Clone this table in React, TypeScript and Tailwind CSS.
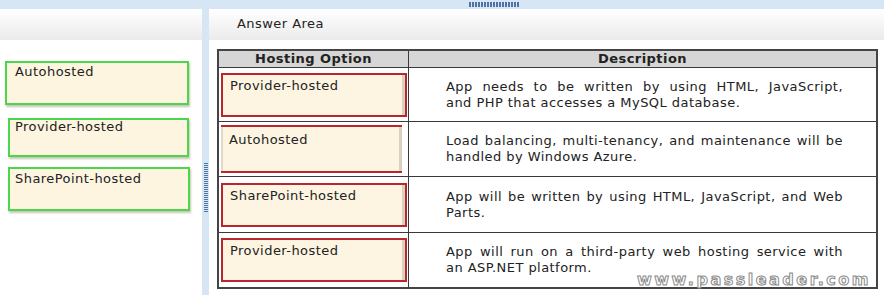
const options = ["Autohosted", "Provider-hosted", "SharePoint-hosted"];

const rows = [
  {
    option: "Provider-hosted",
    variant: "full",
    lines: ["App needs to be written by using HTML, JavaScript,", "and PHP that accesses a MySQL database."],
  },
  {
    option: "Autohosted",
    variant: "lines",
    lines: ["Load balancing, multi-tenancy, and maintenance will be", "handled by Windows Azure."],
  },
  {
    option: "SharePoint-hosted",
    variant: "full",
    lines: ["App will be written by using HTML, JavaScript, and Web", "Parts."],
  },
  {
    option: "Provider-hosted",
    variant: "full",
    lines: ["App will run on a third-party web hosting service with", "an ASP.NET platform."],
  },
];

function Grip({ vertical }: { vertical?: boolean }) {
  return vertical ? (
    <div className="h-[50px] w-[4px] bg-[repeating-linear-gradient(0deg,#4f73a3_0_1px,transparent_1px_2px)]" />
  ) : (
    <div className="h-[5px] w-[51px] bg-[repeating-linear-gradient(90deg,#4f73a3_0_2px,transparent_2px_3px)]" />
  );
}

function AnswerRow({ option, variant, lines, idx }: { option: string; variant: string; lines: string[]; idx: number }) {
  const heights = ["h-[54px]", "h-[55px]", "h-[56px]", "h-[55px]"];
  return (
    <>
      <div className={`${heights[idx]} border-t border-[#3a3a3a] border-r flex items-center pl-[2px]`}>
        {variant === "full" ? (
          <div className="w-[186px] h-[44px] border-2 border-[#b8262e] bg-[#fdf5e1] shadow-[inset_-3px_0_0_#d9d2bf]">
            <div className="pl-[7px] pt-[1px]">{option}</div>
          </div>
        ) : (
          <div className="w-[181px] h-[48px] border-y-2 border-[#b8262e] bg-[#fdf5e1] shadow-[inset_2px_0_0_#e0d9c8,inset_-3px_0_0_#d9d2bf]">
            <div className="pl-[8px] pt-[3px]">{option}</div>
          </div>
        )}
      </div>
      <div className={`${heights[idx]} border-t border-[#3a3a3a] flex flex-col justify-center pl-[37px] leading-[16px]`}>
        <div className="w-[397px] text-justify [text-align-last:justify]">{lines[0]}</div>
        <div className="w-[397px]">{lines[1]}</div>
      </div>
    </>
  );
}

export default function App() {
  return (
    <div className="w-[884px] h-[295px] bg-white flex flex-col text-[13px] tracking-[0.45px] text-[#222] font-['DejaVu_Sans',Verdana,sans-serif] overflow-hidden">
      <div className="h-[9px] bg-[#d6e6f5] flex items-center pl-[469px]">
        <Grip />
      </div>
      <div className="flex flex-1">
        <div className="w-[202px] flex flex-col">
          <div className="h-[31px] bg-gradient-to-b from-white to-[#ebebeb]" />
          <div className="flex flex-col pt-[21px]">
            <div className="ml-[5px] w-[184px] h-[44px] border-2 border-[#4cd64c] bg-[#fdf5e0] shadow-[1px_2px_2px_#c9c3b4] px-[8px] leading-[18px]">
              {options[0]}
            </div>
            <div className="ml-[8px] mt-[13px] w-[181px] h-[39px] border-2 border-[#4cd64c] bg-[#fdf5e0] shadow-[1px_2px_2px_#c9c3b4] px-[5px] leading-[14px]">
              {options[1]}
            </div>
            <div className="ml-[8px] mt-[10px] w-[182px] h-[44px] border-2 border-[#4cd64c] bg-[#fdf5e0] shadow-[1px_2px_2px_#c9c3b4] px-[5px] leading-[20px]">
              {options[2]}
            </div>
          </div>
        </div>
        <div className="w-[7px] bg-[#d6e6f5] flex flex-col items-center pt-[153px]">
          <Grip vertical />
        </div>
        <div className="flex-1 flex flex-col">
          <div className="h-[31px] bg-gradient-to-b from-white to-[#ebebeb] pl-[28px] flex items-center pb-[1px]">
            Answer Area
          </div>
          <div className="relative ml-[8px] mt-[9px] w-[661px] border-2 border-[#444] grid grid-cols-[190px_1fr]">
            <div className="h-[16px] bg-[#d6d6d6] border-r border-[#3a3a3a] font-bold text-center leading-[16px]">
              Hosting Option
            </div>
            <div className="h-[16px] bg-[#d6d6d6] font-bold text-center leading-[16px]">Description</div>
            {rows.map((r, i) => (
              <AnswerRow key={i} idx={i} option={r.option} variant={r.variant} lines={r.lines} />
            ))}
            <div className="absolute right-[5px] bottom-[-1px] text-[16px] font-bold tracking-[2.5px] leading-[16px] text-white [-webkit-text-stroke:1px_#8a8a8a] font-['DejaVu_Sans',sans-serif]">
              www.passleader.com
            </div>
          </div>
        </div>
      </div>
    </div>
  );
}
